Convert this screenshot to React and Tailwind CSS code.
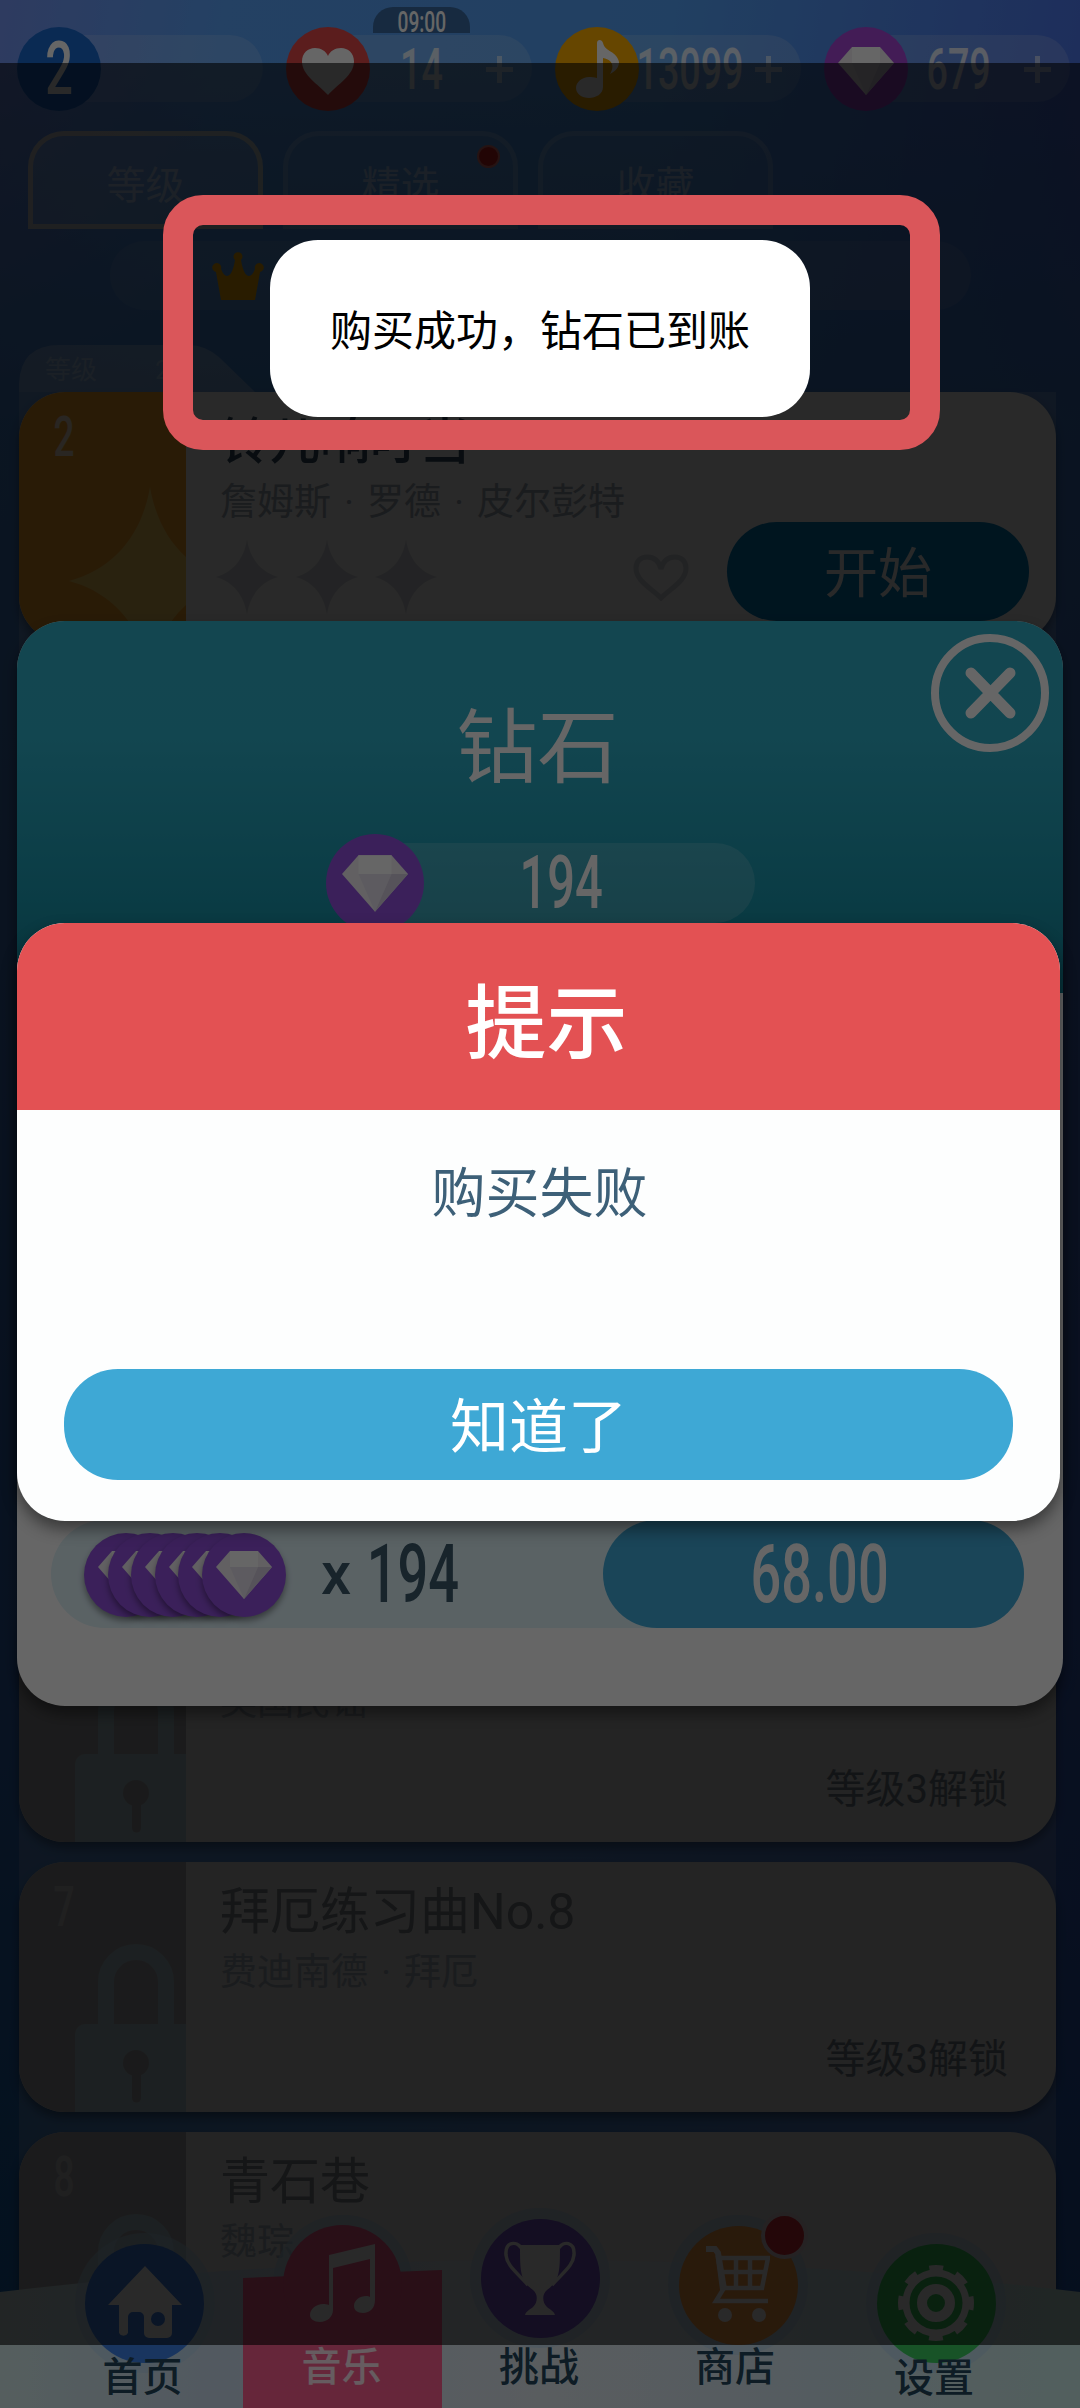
import React from 'react';

const Num = ({ children, className = '' }) => (
  <span className={`inline-block whitespace-nowrap scale-x-[0.66] font-['Roboto',sans-serif] leading-none ${className}`}>
    {children}
  </span>
);

const Gem = ({ className }) => (
  <svg className={className} viewBox="0 0 56 48">
    <path d="M14 0h28l14 16-28 32L0 16z" fill="#f4f0f6" />
    <path d="M14 0h28v16H14z" fill="#fff" />
    <path d="M14 16h28L28 48z" fill="#e9e4ef" />
    <path d="M42 16h14L28 48z" fill="#d6cfe0" />
  </svg>
);

const Star = ({ className }) => (
  <svg className={className} viewBox="0 0 62 74" preserveAspectRatio="none">
    <path d="M31 0C34 18 44 32 62 37C44 42 34 56 31 74C28 56 18 42 0 37C18 32 28 18 31 0z" fill="currentColor" />
  </svg>
);

const Lock = () => (
  <svg className="absolute left-[56px] top-[82px] h-[168px] w-[111px]" viewBox="0 0 111 168">
    <path d="M31 84V38a29.500 29.500 0 0 1 60 0v46" fill="none" stroke="#b2ccd4" strokeWidth="16" />
    <path d="M10 80h101v88H0V90a10 10 0 0 1 10-10z" fill="#b2ccd4" />
    <circle cx="61" cy="119" r="13" fill="#a8a8ad" />
    <path d="M57 125h9v29a4.500 4.500 0 0 1-9 0z" fill="#a8a8ad" />
  </svg>
);

const icons = {
  heart: (
    <svg className="mt-1 h-[47px] w-[52px]" viewBox="0 0 52 47">
      <path d="M26 47C16 36 0 27 0 13.500C0 5 6 0 13 0c6 0 11 3 13 8C28 3 33 0 39 0c7 0 13 5 13 13.500C52 27 36 36 26 47z" fill="#fff" />
    </svg>
  ),
  note: (
    <svg className="h-[58px] w-[43px]" viewBox="0 0 43 58">
      <path d="M21 3c0-4 5-4 6 0c2 9 14 8 16 19c0 5-3 9-9 12c5-9 2-14-7-16v29c0 7-7 11-14 11S0 54 0 48s6-11 13-11c3 0 5 0 8 1z" fill="#fff" />
    </svg>
  ),
  gem: <Gem className="mt-1 h-[48px] w-[56px]" />,
};

const resources = [
  { key: 'level', bg: 'bg-[#1a6ad0]' },
  { key: 'heart', bg: 'bg-[#e34a4a]', value: '14', timer: '09:00' },
  { key: 'note', bg: 'bg-[#ffae00]', value: '13099' },
  { key: 'gem', bg: 'bg-[#a846d8]', value: '679' },
];

const Resource = ({ item }) => (
  <div className="relative flex h-[84px] w-[246px] items-center">
    {item.timer && (
      <div className="absolute -top-5 left-[87px] flex h-[26px] w-[97px] items-center justify-center rounded-t-[20px] bg-[#3a6aa0] pt-1 text-white">
        <Num className="text-[29px] font-medium">{item.timer}</Num>
      </div>
    )}
    <div className="absolute left-10 right-0 top-2 h-[67px] rounded-r-[34px] bg-white/15" />
    <div className={`relative flex h-[84px] w-[84px] shrink-0 items-center justify-center rounded-full ${item.bg}`}>
      {icons[item.key] || <Num className="text-[74px] font-medium text-white">2</Num>}
    </div>
    {item.value && (
      <>
        <div className="relative flex w-[102px] justify-center text-white/80">
          <Num className="text-[57px] font-medium">{item.value}</Num>
        </div>
        <svg className="relative ml-[14px] h-[27px] w-[27px]" viewBox="0 0 27 27">
          <path d="M13.500 0v27M0 13.500h27" stroke="#fff" strokeOpacity=".55" strokeWidth="5" />
        </svg>
      </>
    )}
  </div>
);

const Tab = ({ label, active, dot }) => (
  <div
    className={`relative flex h-[98px] w-[235px] items-center justify-center rounded-t-[36px] border-[5px] pt-[13px] text-[39px] ${
      active ? 'border-[#ffe9c0]/60 bg-white/15 text-white/50' : 'border-white/20 bg-white/5 text-white/50'
    }`}
  >
    {label}
    {dot && <div className="absolute right-[13px] top-[9px] h-[23px] w-[23px] rounded-full border-2 border-white/40 bg-[#d82424]" />}
  </div>
);

const SongCard = ({ no, title, author, unlock, locked }) => (
  <div
    className={`relative flex h-[250px] shrink-0 overflow-hidden rounded-[46px] shadow-[0_6px_10px_rgba(0,0,0,0.35)] ${
      locked ? 'bg-[#e1e1e1]' : 'bg-white'
    }`}
  >
    <div className={`relative w-[167px] shrink-0 overflow-hidden ${locked ? 'bg-[#adadb2]' : 'bg-[#ffab2c]'}`}>
      <div className={`flex w-[90px] justify-center pt-[17px] ${locked ? 'text-white/40' : 'text-white/80'}`}>
        <Num className="text-[56px] font-medium">{no}</Num>
      </div>
      {locked ? <Lock /> : <Star className="absolute left-[50px] top-[95px] h-[188px] w-[162px] text-[#ffe070]/80" />}
    </div>
    <div className="flex flex-1 flex-col pl-[34px]">
      <div className={`mt-[18px] h-[64px] whitespace-nowrap text-[50px] leading-[64px] ${locked ? 'text-[#858b92]' : 'font-medium text-[#325066]'}`}>
        {title}
      </div>
      <div className="mt-1 h-[50px] whitespace-nowrap text-[37px] leading-[50px] text-[#a5b0bc] [word-spacing:4px]">{author}</div>
      {unlock && <div className="ml-auto mr-[48px] mt-8 text-[40px] leading-[60px] text-[#77838d]">{unlock}</div>}
      {!locked && (
        <div className="-mt-[7px] flex h-[100px] items-center">
          <Star className="ml-[-4px] mt-3 h-[74px] w-[62px] text-[#dcdfe5]" />
          <Star className="ml-[18px] mt-3 h-[74px] w-[62px] text-[#dcdfe5]" />
          <Star className="ml-[17px] mt-3 h-[74px] w-[62px] text-[#dcdfe5]" />
          <svg className="ml-auto mr-[38px] mt-3 h-[47px] w-[56px]" viewBox="0 0 56 47">
            <path d="M28 44C18 34 3 27 3 14C3 7 8 3 14 3c7 0 12 4 14 12C30 7 35 3 42 3c6 0 11 4 11 11C53 27 38 34 28 44z" fill="none" stroke="#d8dae2" strokeWidth="5" />
          </svg>
          <div className="mr-[27px] flex h-[99px] w-[302px] items-center justify-center rounded-full bg-[#0085c6] pt-[6px] text-[54px] text-white">
            开始
          </div>
        </div>
      )}
    </div>
  </div>
);

const NavBubble = ({ bg, children, badge }) => (
  <div className="relative flex h-[140px] w-[140px] shrink-0 items-center justify-center rounded-full bg-[#b9d9f0]/60">
    <div className={`flex h-[119px] w-[119px] items-center justify-center rounded-full ${bg}`}>{children}</div>
    {badge && <div className="absolute right-0 -top-[3px] h-[47px] w-[47px] rounded-full border-4 border-[#e8d5dc] bg-[#e0303a]" />}
  </div>
);

const BottomNav = () => (
  <div className="absolute bottom-0 left-0 h-[200px] w-full">
    <svg className="absolute bottom-0 left-0 h-[149px] w-full" viewBox="0 0 1080 149" preserveAspectRatio="none">
      <defs>
        <linearGradient id="nav" x1="0" x2="1">
          <stop offset="0" stopColor="#d5ecec" />
          <stop offset=".2" stopColor="#cddef0" />
          <stop offset=".5" stopColor="#dfe8ee" />
          <stop offset=".75" stopColor="#d3e6ef" />
          <stop offset="1" stopColor="#cdeeea" />
        </linearGradient>
      </defs>
      <path d="M0 33Q540 -31 1080 33V149H0z" fill="url(#nav)" />
    </svg>
    <div className="relative flex h-full text-[40px] font-medium leading-[48px] text-[#24485c]">
      <div className="flex w-[243px] flex-col items-center pl-[46px] pt-[25px]">
        <NavBubble bg="bg-[#3f85ee]">
          <svg className="mt-[-2px] h-[72px] w-[74px]" viewBox="0 0 74 72">
            <path d="M37 0l37 39H64v28a5 5 0 0 1-5 5H41a5 5 0 0 1-5-5V51a5 5 0 0 0-5-5h-6a5 5 0 0 0-5 5v16a5 5 0 0 1-9 0V39H0z" fill="#fff" />
            <circle cx="50" cy="53" r="7" fill="#3f85ee" />
          </svg>
        </NavBubble>
        <span className="relative mt-[-19px] pr-[4px]">首页</span>
      </div>
      <div className="relative flex w-[199px] flex-col items-center pt-[7px]">
        <div className="relative flex h-[140px] w-[140px] shrink-0 items-center justify-center">
          <div className="absolute left-0 top-0 h-[70px] w-[140px] rounded-t-full bg-[#b9d9f0]/60" />
        </div>
        <svg className="absolute bottom-0 left-0 h-[138px] w-[199px]" viewBox="0 0 199 138">
          <path d="M0 8L199 0v138H0z" fill="#ff5f92" />
        </svg>
        <div className="absolute left-[40px] top-[17px] flex h-[119px] w-[119px] items-center justify-center rounded-full bg-[#ff5f92]">
          <svg className="mt-[-3px] h-[78px] w-[65px]" viewBox="0 0 65 78">
            <path d="M19 11L65 0v56c0 8-5 13-12 13c-6 0-9-3-9-7c0-6 6-10 12-10c2 0 3 0 4 1V15L23 24v42c0 7-6 12-13 12c-6 0-10-3-10-7c0-6 6-11 13-11c2 0 4 0 6 1z" fill="#fff" />
          </svg>
        </div>
        <span className="relative mt-[-11px] pr-[2px] text-white/85">音乐</span>
      </div>
      <div className="flex w-[196px] flex-col items-center">
        <NavBubble bg="bg-[#7f57d4]">
          <svg className="h-[74px] w-[74px]" viewBox="0 0 74 74">
            <path d="M17 4h40c0 26 0 36-13 45c-5 4-5 12 0 17c2 2 7 4 8 8H22c1-4 6-6 8-8c5-5 5-13 0-17C17 40 17 30 17 4z" fill="#fff" />
            <path d="M18 7C14 0 2 0 3 14c1 10 8 15 22 30M56 7C60 0 72 0 71 14c-1 10-8 15-22 30" fill="none" stroke="#fff" strokeWidth="3.500" />
          </svg>
        </NavBubble>
        <span className="relative mt-[-4px] pr-[2px]">挑战</span>
      </div>
      <div className="flex w-[200px] flex-col items-center pt-[7px]">
        <NavBubble bg="bg-[#ffa24a]" badge>
          <svg className="mt-[-2px] h-[76px] w-[64px]" viewBox="0 0 64 76">
            <path d="M0 3h9l3 4l6 36" fill="none" stroke="#fff" strokeWidth="6" />
            <path d="M12 12h50l-6 30H16z M30 12v30 M44 12v30 M14 26h45" fill="none" stroke="#fff" strokeWidth="4.500" />
            <path d="M18 42L10 55H62" fill="none" stroke="#fff" strokeWidth="4.500" />
            <circle cx="19" cy="69" r="7" fill="#fff" />
            <circle cx="53" cy="69" r="7" fill="#fff" />
          </svg>
        </NavBubble>
        <span className="relative mt-[-11px] pr-[6px]">商店</span>
      </div>
      <div className="flex w-[196px] flex-col items-center pt-[25px]">
        <NavBubble bg="bg-[#3cd062]">
          <svg className="h-[76px] w-[76px]" viewBox="0 0 76 76">
            <circle cx="38" cy="38" r="30" fill="none" stroke="#fff" strokeWidth="7" />
            <circle cx="38" cy="38" r="34" fill="none" stroke="#fff" strokeWidth="8" strokeDasharray="13.350 13.350" strokeDashoffset="6.700" />
            <circle cx="38" cy="38" r="14" fill="none" stroke="#fff" strokeWidth="10" />
          </svg>
        </NavBubble>
        <span className="relative mt-[-18px] pr-[4px]">设置</span>
      </div>
    </div>
  </div>
);

const Home = () => (
  <div className="relative flex h-[2408px] flex-col overflow-hidden bg-[linear-gradient(100deg,#7494f0_0%,#5aa2f8_15%,#54a0f4_45%,#4c74e4_72%,#8a50e0_100%)]">
    <div className="absolute inset-0 bg-[linear-gradient(180deg,transparent_0px,transparent_60px,#3c80cc_420px,#3c70c0_1000px,#2c68c8_1700px,#0c62b4_2300px)] opacity-80" />
    <div className="relative ml-[17px] mt-[27px] flex gap-[23px]">
      {resources.map((r) => (
        <Resource key={r.key} item={r} />
      ))}
    </div>
    <div className="relative ml-7 mt-5 flex gap-5">
      <Tab label="等级" active />
      <Tab label="精选" dot />
      <Tab label="收藏" />
    </div>
    <div className="relative ml-[110px] mt-3 h-[69px] w-[861px] rounded-full bg-white/10 pl-[101px] pt-[10px]">
      <svg className="h-[49px] w-[54px]" viewBox="0 0 54 49">
        <path d="M10 49L5 21a4.500 4.500 0 1 1 5-3c4 11 11 10 14-9a4.500 4.500 0 1 1 6 0c3 19 10 20 14 9a4.500 4.500 0 1 1 5 3l-5 28z" fill="#ffb400" />
      </svg>
    </div>
    <div className="relative ml-[19px] mt-[35px] flex h-[2063px] w-[1037px] flex-col">
      <div className="absolute inset-x-0 bottom-0 top-[47px] bg-white/20" />
      <div className="relative h-[47px] w-[236px]">
        <svg className="absolute inset-0 h-full w-full" viewBox="0 0 236 47">
          <path d="M0 47V38Q2 0 40 0H170Q186 0 200 12L236 47z" fill="#fff" fillOpacity=".3" />
        </svg>
        <div className="relative flex gap-[58px] pl-[26px] pt-[6px] text-[26px] leading-[38px] text-white/35">
          <span>等级</span>
          <span>2</span>
        </div>
      </div>
      <SongCard no="2" title="铃儿响叮当" author="詹姆斯 · 罗德 · 皮尔彭特" />
      <div className="mt-[950px] flex flex-col gap-5">
        <SongCard locked no="6" title="夜曲" author="英国民谣" unlock="等级3解锁" />
        <SongCard locked no="7" title="拜厄练习曲No.8" author="费迪南德 · 拜厄" unlock="等级3解锁" />
        <SongCard locked no="8" title="青石巷" author="魏琮" />
      </div>
    </div>
    <BottomNav />
    <div className="absolute left-0 top-[63px] h-[2282px] w-full bg-black/60" />
  </div>
);

const DiamondModal = () => (
  <div className="absolute left-[17px] top-[621px] flex h-[1085px] w-[1046px] flex-col overflow-hidden rounded-[48px] bg-white shadow-[0_8px_14px_rgba(0,0,0,0.4)]">
    <div className="relative flex h-[372px] shrink-0 flex-col items-center bg-[linear-gradient(180deg,#31b0c8_0%,#2fafc8_30%,#1b96ac_75%,#148094_100%)]">
      <div className="mt-[78px] pr-[5px] text-[81px] leading-[100px] text-white">钻石</div>
      <div className="relative mt-[35px] flex h-[98px] w-[429px] items-center">
        <div className="absolute left-12 right-0 top-[9px] h-[80px] rounded-r-full bg-white/15" />
        <div className="relative flex h-[98px] w-[98px] shrink-0 items-center justify-center rounded-full bg-[#9352e0]">
          <Gem className="h-[57px] w-[66px]" />
        </div>
        <div className="relative flex flex-1 justify-center pr-[56px] text-white">
          <Num className="text-[74px] font-medium">194</Num>
        </div>
      </div>
      <svg className="absolute right-[14px] top-[13px] h-[118px] w-[118px]" viewBox="0 0 118 118">
        <circle cx="59" cy="59" r="55" fill="none" stroke="#fff" strokeWidth="8" />
        <path d="M40 39l39 40M79 39L40 79" stroke="#fff" strokeWidth="11" strokeLinecap="round" />
      </svg>
    </div>
    <div className="ml-[34px] mt-[527px] flex h-[108px] w-[973px] items-center rounded-full bg-[#e1f4fb]">
      <div className="ml-[33px] mt-[2px] flex w-[203px]">
        {[0, 1, 2, 3, 4, 5].map((i) => (
          <div key={i} className="-mr-[60.400px] flex h-[84px] w-[84px] shrink-0 items-center justify-center rounded-full bg-[#9352e0] shadow-[0_4px_6px_rgba(0,0,0,0.4)]">
            <Gem className="h-[48px] w-[56px]" />
          </div>
        ))}
      </div>
      <div className="ml-[34px] flex w-[142px] items-center text-[#3c5a6c]">
        <span className="text-[60px] font-medium leading-none">x</span>
        <Num className="-ml-[8px] text-[82px] font-medium">194</Num>
      </div>
      <div className="ml-auto flex h-[108px] w-[421px] items-center justify-center rounded-full bg-[#41acdc] pl-3 text-white">
        <Num className="text-[82px] font-medium">68.00</Num>
      </div>
    </div>
  </div>
);

const FailDialog = () => (
  <div className="absolute left-[17px] top-[923px] flex h-[598px] w-[1043px] flex-col overflow-hidden rounded-[48px] bg-[#fdfefe] shadow-[0_8px_16px_rgba(0,0,0,0.45)]">
    <div className="flex h-[187px] items-center justify-center bg-[#e35153] pl-4 pt-4 text-[81px] font-medium text-white">提示</div>
    <div className="mt-[49px] pl-[2px] text-center text-[54px] leading-[72px] text-[#3d6078]">购买失败</div>
    <div className="mx-[47px] mt-auto mb-[41px] flex h-[111px] items-center justify-center rounded-[54px] bg-[#3ea8d5] pt-2 text-[59px] text-white">
      知道了
    </div>
  </div>
);

export default function App() {
  return (
    <div className="relative h-[2408px] w-[1080px] overflow-hidden bg-black font-['Roboto','Noto_Sans_CJK_SC',sans-serif]">
      <Home />
      <DiamondModal />
      <div className="absolute inset-0 bg-black/60" />
      <FailDialog />
      <div className="absolute left-[163px] top-[195px] h-[255px] w-[777px] rounded-[40px] border-[30px] border-[#da565a]" />
      <div className="absolute left-[270px] top-[240px] flex h-[177px] w-[540px] items-center justify-center rounded-[48px] bg-white pt-[5px] text-[42px] text-black">
        购买成功，钻石已到账
      </div>
    </div>
  );
}
